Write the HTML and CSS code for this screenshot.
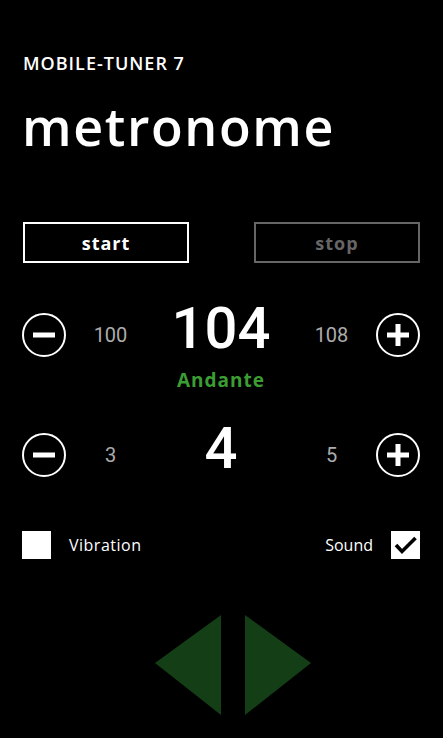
FILE: index.html
```html
<!DOCTYPE html>
<html lang="en">
<head>
    <meta charset="UTF-8">
    <meta name="viewport" content="width=device-width, initial-scale=1.0">
    <title>Metronome</title>
    <link rel="stylesheet" href="styles.css">
</head>
<body>

    <div class="app">
        <div class="app-title">MOBILE-TUNER 7</div>
        <h1 class="page-title">metronome</h1>

        <!-- start / stop -->
        <div class="controls">
            <button class="btn">start</button>
            <button class="btn btn-disabled">stop</button>
        </div>

        <!-- tempo -->
        <div class="stepper">
            <button class="round-btn" aria-label="slower">
                <svg viewBox="0 0 44 44" width="44" height="44"><circle cx="22" cy="22" r="21" fill="none" stroke="#fff" stroke-width="2"/><rect x="11" y="19.5" width="22" height="5" fill="#fff"/></svg>
            </button>
            <span class="side-value">100</span>
            <span class="main-value">104</span>
            <span class="side-value">108</span>
            <button class="round-btn" aria-label="faster">
                <svg viewBox="0 0 44 44" width="44" height="44"><circle cx="22" cy="22" r="21" fill="none" stroke="#fff" stroke-width="2"/><rect x="11" y="19.5" width="22" height="5" fill="#fff"/><rect x="19.5" y="11" width="5" height="22" fill="#fff"/></svg>
            </button>
        </div>
        <div class="tempo-name">Andante</div>

        <!-- beats -->
        <div class="stepper stepper-beats">
            <button class="round-btn" aria-label="fewer beats">
                <svg viewBox="0 0 44 44" width="44" height="44"><circle cx="22" cy="22" r="21" fill="none" stroke="#fff" stroke-width="2"/><rect x="11" y="19.5" width="22" height="5" fill="#fff"/></svg>
            </button>
            <span class="side-value">3</span>
            <span class="main-value">4</span>
            <span class="side-value">5</span>
            <button class="round-btn" aria-label="more beats">
                <svg viewBox="0 0 44 44" width="44" height="44"><circle cx="22" cy="22" r="21" fill="none" stroke="#fff" stroke-width="2"/><rect x="11" y="19.5" width="22" height="5" fill="#fff"/><rect x="19.5" y="11" width="5" height="22" fill="#fff"/></svg>
            </button>
        </div>

        <!-- options -->
        <div class="options">
            <label class="option">
                <span class="check"></span>
                <span class="option-wide">Vibration</span>
            </label>
            <label class="option">
                <span>Sound</span>
                <span class="check">
                    <svg viewBox="0 0 29 28" width="29" height="28"><path d="M5 14 L11 20.5 L24.5 7" fill="none" stroke="#000" stroke-width="3.6"/></svg>
                </span>
            </label>
        </div>

        <!-- playback arrows -->
        <div class="arrows">
            <svg viewBox="0 0 156 101" width="156" height="101">
                <polygon points="0,48 66,0 66,100" fill="#143e15"/>
                <polygon points="90,0 156,48 90,100" fill="#143e15"/>
            </svg>
        </div>
    </div>

</body>
</html>
```

FILE: styles.css
```css
body {
    margin: 0;
    background: #000;
    color: #fff;
    font-family: 'Open Sans', sans-serif;
}

.app {
    width: 443px;
    height: 738px;
    box-sizing: border-box;
    padding: 51px 23px 0 22px;
    overflow: hidden;
}

.app-title {
    font-size: 18px;
    font-weight: 600;
    line-height: 24px;
    letter-spacing: 1px;
    padding-left: 1px;
}

.page-title {
    margin: 21px 0 0;
    font-size: 52px;
    font-weight: 600;
    line-height: 60px;
    letter-spacing: 1.6px;
}

.controls {
    display: flex;
    justify-content: space-between;
    margin-top: 66px;
}

.btn {
    width: 166px;
    height: 41px;
    background: #000;
    color: #fff;
    border: 2px solid #fff;
    font-family: 'Open Sans', sans-serif;
    font-size: 18px;
    font-weight: 700;
    letter-spacing: 1px;
    padding: 0;
    margin-left: 1px;
}

.btn-disabled {
    color: #666;
    border-color: #666;
    margin: 0;
}

.stepper {
    display: grid;
    grid-template-columns: 44px 89px 1fr 89px 44px;
    align-items: center;
    margin-top: 50px;
    height: 44px;
}

.stepper-beats {
    margin-top: 41px;
}

.round-btn {
    background: none;
    border: none;
    padding: 0;
    width: 44px;
    height: 44px;
}

.round-btn svg {
    display: block;
}

.side-value {
    text-align: center;
    color: #acacac;
    font-family: Roboto, sans-serif;
    font-size: 20px;
}

.main-value {
    text-align: center;
    font-family: Roboto, sans-serif;
    font-size: 58px;
    font-weight: 500;
    line-height: 44px;
    margin-top: -15px;
}

.tempo-name {
    text-align: center;
    color: #3c9e32;
    font-size: 19px;
    font-weight: 700;
    line-height: 24px;
    letter-spacing: 1px;
    margin-top: 11px;
}

.options {
    display: flex;
    justify-content: space-between;
    align-items: center;
    margin-top: 54px;
}

.option {
    display: flex;
    align-items: center;
    gap: 18px;
    font-size: 16px;
}

.option-wide {
    letter-spacing: 0.5px;
}

.check {
    display: block;
    width: 29px;
    height: 28px;
    background: #fff;
}

.check svg {
    display: block;
}

.arrows {
    display: flex;
    justify-content: center;
    margin-top: 56px;
    padding-left: 24px;
}

.arrows svg {
    display: block;
}
```
